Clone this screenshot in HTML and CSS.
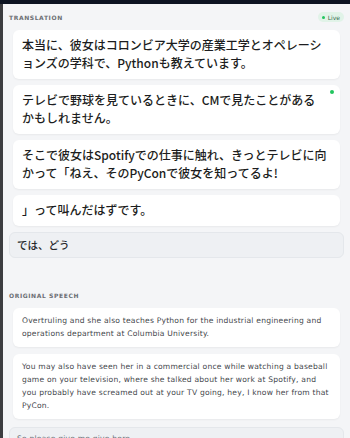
FILE: index.html
```html
<!DOCTYPE html>
<html lang="ja">
<head>
    <meta charset="UTF-8">
    <meta name="viewport" content="width=device-width, initial-scale=1.0">
    <title>Live Translation</title>
    <link rel="stylesheet" href="styles.css">
</head>
<body>

<div class="app">
    <div class="rail"></div>
    <main class="panel">

        <section class="section">
            <div class="section-head">
                <h3 class="section-title">Translation</h3>
                <span class="live"><span class="live-dot"></span>Live</span>
            </div>
            <div class="list">
                <div class="card ja">本当に、彼女はコロンビア大学の産業工学とオペレーションズの学科で、Pythonも教えています。</div>
                <div class="card ja active">テレビで野球を見ているときに、CMで見たことがあるかもしれません。<span class="new-dot"></span></div>
                <div class="card ja">そこで彼女はSpotifyでの仕事に触れ、きっとテレビに向かって「ねえ、そのPyConで彼女を知ってるよ!</div>
                <div class="card ja">」って叫んだはずです。</div>
            </div>
            <div class="interim ja-interim">では、どう</div>
        </section>

        <section class="section original">
            <div class="section-head">
                <h3 class="section-title">Original Speech</h3>
            </div>
            <div class="list">
                <div class="card en">Overtruling and she also teaches Python for the industrial engineering and operations department at Columbia University.</div>
                <div class="card en">You may also have seen her in a commercial once while watching a baseball game on your television, where she talked about her work at Spotify, and you probably have screamed out at your TV going, hey, I know her from that PyCon.</div>
            </div>
            <div class="interim en-interim">So please give me give here</div>
        </section>

    </main>
</div>

</body>
</html>
```

FILE: styles.css
```css
body, html {
    margin: 0;
    padding: 0;
    background-color: #0d1422;
    font-family: "DejaVu Sans", "Noto Sans CJK JP", sans-serif;
}

.app {
    display: flex;
    height: 438px;
    overflow: hidden;
}

/* franja oscura de la izquierda */
.rail {
    width: 3px;
    background-color: #3c3d40;
    margin-top: 4px;
}

.panel {
    flex: 1;
    margin-top: 4px;
    background-color: #f4f5f7;
    padding: 0 6px;
}

.section-head {
    display: flex;
    justify-content: space-between;
    align-items: center;
    height: 10px;
    padding-top: 8px;
    margin-bottom: 8px;
}

.section-title {
    margin: 0;
    font-size: 6px;
    font-weight: bold;
    letter-spacing: 0.6px;
    text-transform: uppercase;
    color: #6b6e73;
}

.live {
    display: flex;
    align-items: center;
    gap: 3px;
    height: 10px;
    padding: 0 4px;
    border-radius: 5px;
    background-color: #e1f3e8;
    color: #3b6f52;
    font-size: 6px;
}

.live-dot {
    width: 3px;
    height: 3px;
    border-radius: 50%;
    background-color: #22c55e;
}

.list {
    display: flex;
    flex-direction: column;
    gap: 6px;
    padding: 0 4px;
}

.card {
    position: relative;
    background-color: #ffffff;
    border-radius: 6px;
    box-shadow: 0 1px 2px rgba(0, 0, 0, 0.05);
}

.ja {
    font-family: "Noto Sans CJK JP", sans-serif;
    font-size: 12px;
    line-height: 18px;
    font-weight: 500;
    color: #1c1d20;
    padding: 6px 10px 7px 9px;
}

/* el segmento activo deja sitio al punto verde */
.ja.active {
    padding-right: 16px;
}

.new-dot {
    position: absolute;
    top: 5px;
    right: 6px;
    width: 4px;
    height: 4px;
    border-radius: 50%;
    background-color: #22c55e;
}

.interim {
    margin-top: 6px;
    background-color: #eef0f3;
    border: 1px solid #e4e7eb;
    border-radius: 6px;
}

.ja-interim {
    font-family: "Noto Sans CJK JP", sans-serif;
    font-size: 10.5px;
    line-height: 14px;
    font-weight: 500;
    color: #26282c;
    padding: 5px 7px;
}

.original {
    margin-top: 24px;
}

.original .list {
    gap: 7px;
}

.en {
    font-size: 7.6px;
    letter-spacing: 0.2px;
    line-height: 13px;
    color: #45474c;
    padding: 6px 8px 7px 9px;
}

.en-interim {
    margin-top: 8px;
    font-size: 7.6px;
    letter-spacing: 0.2px;
    line-height: 13px;
    color: #6b6e73;
    padding: 4px 7px;
}
```
